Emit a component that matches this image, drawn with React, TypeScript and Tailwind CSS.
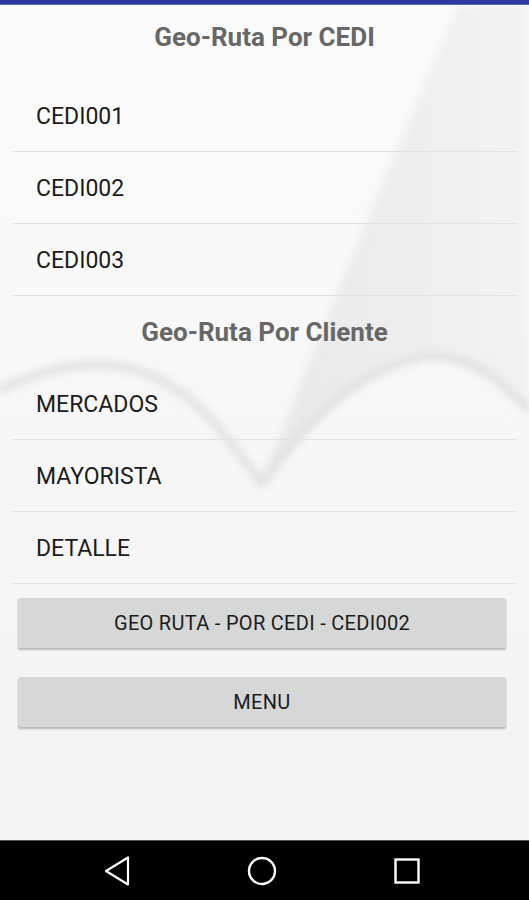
import React from 'react';

const cedis = ['CEDI001', 'CEDI002', 'CEDI003'];
const clientes = ['MERCADOS', 'MAYORISTA', 'DETALLE'];

const Backdrop = () => (
  <svg
    className="absolute inset-0 h-full w-full"
    viewBox="0 0 529 835"
    preserveAspectRatio="none"
  >
    <defs>
      <linearGradient id="sweep" x1="0" y1="0" x2="1" y2="0">
        <stop offset="0" stopColor="#e8e8e8" />
        <stop offset="1" stopColor="#f3f3f3" />
      </linearGradient>
      <filter id="soft">
        <feGaussianBlur stdDeviation="4" />
      </filter>
    </defs>
    <path
      d="M458 0 C 420 90, 360 230, 300 380 C 285 420, 272 450, 262 475 C 300 430, 360 360, 420 350 C 470 345, 505 380, 529 410 L529 0 Z"
      fill="url(#sweep)"
      filter="url(#soft)"
    />
    <path
      d="M0 385 C 60 355, 120 350, 170 380 C 210 405, 240 450, 262 478 C 290 440, 340 370, 420 352 C 470 345, 505 380, 529 405"
      fill="none"
      stroke="#dddddd"
      strokeWidth="7"
      filter="url(#soft)"
    />
  </svg>
);

const Row = ({ label }: { label: string }) => (
  <div className="h-[72px] flex items-center pl-6 pt-[3px] border-b border-[#e2e2e2] text-[23px] text-[#1c1c1c]">
    {label}
  </div>
);

const Heading = ({ children, h }: { children: React.ReactNode; h: string }) => (
  <div className={`${h} flex items-center justify-center text-[26px] font-bold text-[#676767]`}>
    {children}
  </div>
);

const Button = ({ label }: { label: string }) => (
  <button className="mx-1.5 h-[50px] w-[488px] bg-[#d6d7d7] rounded-[2px] shadow-[0_2px_2px_rgba(0,0,0,0.25)] text-[20px] tracking-[0.3px] text-[#1c1c1c] flex items-center justify-center">
    {label}
  </button>
);

const App = () => {
  return (
    <div
      className="w-[529px] h-[900px] flex flex-col bg-[#f8f8f8] overflow-hidden"
      style={{ fontFamily: 'Roboto, "Liberation Sans", sans-serif' }}
    >
      <div className="h-[5px] bg-[#2f3a9c] border-b border-[#5c66b8]" />
      <main className="relative flex-1 bg-gradient-to-b from-[#fbfbfb] to-[#f3f3f3]">
        <Backdrop />
        <div className="relative px-3">
          <Heading h="h-[75px] pb-[11px]">Geo-Ruta Por CEDI</Heading>
          {cedis.map((c) => (
            <Row key={c} label={c} />
          ))}
          <Heading h="h-[72px]">Geo-Ruta Por Cliente</Heading>
          {clientes.map((c) => (
            <Row key={c} label={c} />
          ))}
          <div className="flex flex-col gap-[29px] pt-[14px]">
            <Button label="GEO RUTA - POR CEDI - CEDI002" />
            <Button label="MENU" />
          </div>
        </div>
      </main>
      <nav className="h-[60px] bg-black border-t border-[#555] flex items-center gap-[115px] pl-[102px]">
        <svg width="30" height="30" viewBox="0 0 30 30" fill="none" stroke="white" strokeWidth="2.2" strokeLinejoin="round">
          <path d="M26 1.5 L26 28.5 L4 15 Z" />
        </svg>
        <svg width="30" height="30" viewBox="0 0 30 30" fill="none" stroke="white" strokeWidth="2.4">
          <circle cx="15" cy="15" r="13" />
        </svg>
        <svg width="30" height="30" viewBox="0 0 30 30" fill="none" stroke="white" strokeWidth="2.4">
          <rect x="3.5" y="3.5" width="23" height="23" />
        </svg>
      </nav>
    </div>
  );
};

export default App;
